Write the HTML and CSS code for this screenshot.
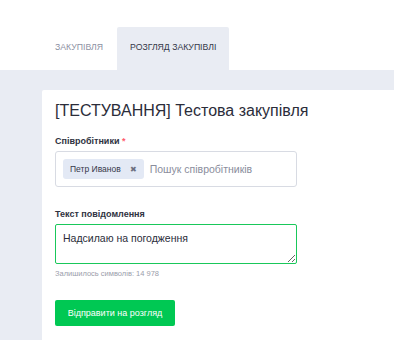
FILE: index.html
```html
<!DOCTYPE html>
<html lang="uk">
  <head>
    <meta charset="UTF-8" />
    <meta name="viewport" content="width=device-width, initial-scale=1.0" />
    <title>Розгляд закупівлі</title>
    <link rel="stylesheet" href="styles.css">
  </head>
  <body>
    <!-- вкладки -->
    <div class="tabs">
      <div class="tab">Закупівля</div>
      <div class="tab active">Розгляд закупівлі</div>
    </div>
    <div class="page">
      <div class="card">
        <h1>[ТЕСТУВАННЯ] Тестова закупівля</h1>
        <div class="field">
          <label>Співробітники <span class="req">*</span></label>
          <div class="picker">
            <span class="chip">Петр Иванов <span class="chip-x">&#10006;</span></span>
            <span class="placeholder">Пошук співробітників</span>
          </div>
        </div>
        <div class="field">
          <label>Текст повідомлення</label>
          <textarea class="message">Надсилаю на погодження</textarea>
          <div class="hint">Залишилось символів: 14 978</div>
        </div>
        <button class="submit">Відправити на розгляд</button>
      </div>
    </div>
  </body>
</html>
```

FILE: styles.css
```css
* {
  margin: 0;
  padding: 0;
  box-sizing: border-box;
}
body {
  font-family: "Liberation Sans", Arial, sans-serif;
  color: #2f3241;
  background: #fff;
  height: 340px;
  display: flex;
  flex-direction: column;
  overflow: hidden;
}
/* вкладки зверху */
.tabs {
  display: flex;
  padding: 27px 0 0 42px;
}
.tab {
  height: 43px;
  padding: 0 13px 4px;
  font-size: 8.7px;
  text-transform: uppercase;
  color: #8d91a3;
  display: flex;
  align-items: center;
  margin-right: 1px;
}
.tab.active {
  background: #e9ecf3;
  color: #353849;
  border-radius: 2px 2px 0 0;
}
.page {
  flex: 1;
  background: #e9ecf3;
  padding: 20px 0 0 42px;
  display: flex;
}
.card {
  flex: 1;
  background: #fff;
  border-radius: 2px 0 0 0;
  padding: 10px 10px 0 13px;
}
h1 {
  font-size: 16px;
  font-weight: 400;
  color: #2b2d3a;
  line-height: 22px;
  margin-bottom: 14px;
  white-space: nowrap;
}
.field {
  width: 242px;
  margin-bottom: 22px;
}
label {
  display: block;
  font-size: 9px;
  font-weight: 700;
  color: #2f3241;
  margin-bottom: 5px;
}
.req {
  color: #ff5c6c;
}
.picker {
  height: 36px;
  border: 1px solid #d8dbe3;
  border-radius: 3px;
  display: flex;
  align-items: center;
  padding: 0 7px;
  gap: 6px;
}
.chip {
  background: #e3e9f5;
  border-radius: 3px;
  height: 20px;
  display: flex;
  align-items: center;
  padding: 0 7px;
  font-size: 8.5px;
  color: #353849;
  gap: 9px;
}
.chip-x {
  font-size: 8px;
  color: #6c7080;
}
.placeholder {
  font-size: 10.5px;
  color: #8a8d9c;
}
.message {
  display: block;
  width: 100%;
  height: 40px;
  border: 1.5px solid #19c85a;
  border-radius: 2px;
  padding: 7px 7px;
  font-family: "Liberation Sans", Arial, sans-serif;
  font-size: 10.5px;
  color: #2b2d3a;
  resize: vertical;
  outline: none;
}
.hint {
  font-size: 7.5px;
  color: #9a9daa;
  margin-top: 5px;
}
.submit {
  display: block;
  margin-top: 8px;
  width: 120px;
  height: 26px;
  background: #00c853;
  border: none;
  border-radius: 2px;
  color: #fff;
  font-family: "Liberation Sans", Arial, sans-serif;
  font-size: 9px;
}
```
